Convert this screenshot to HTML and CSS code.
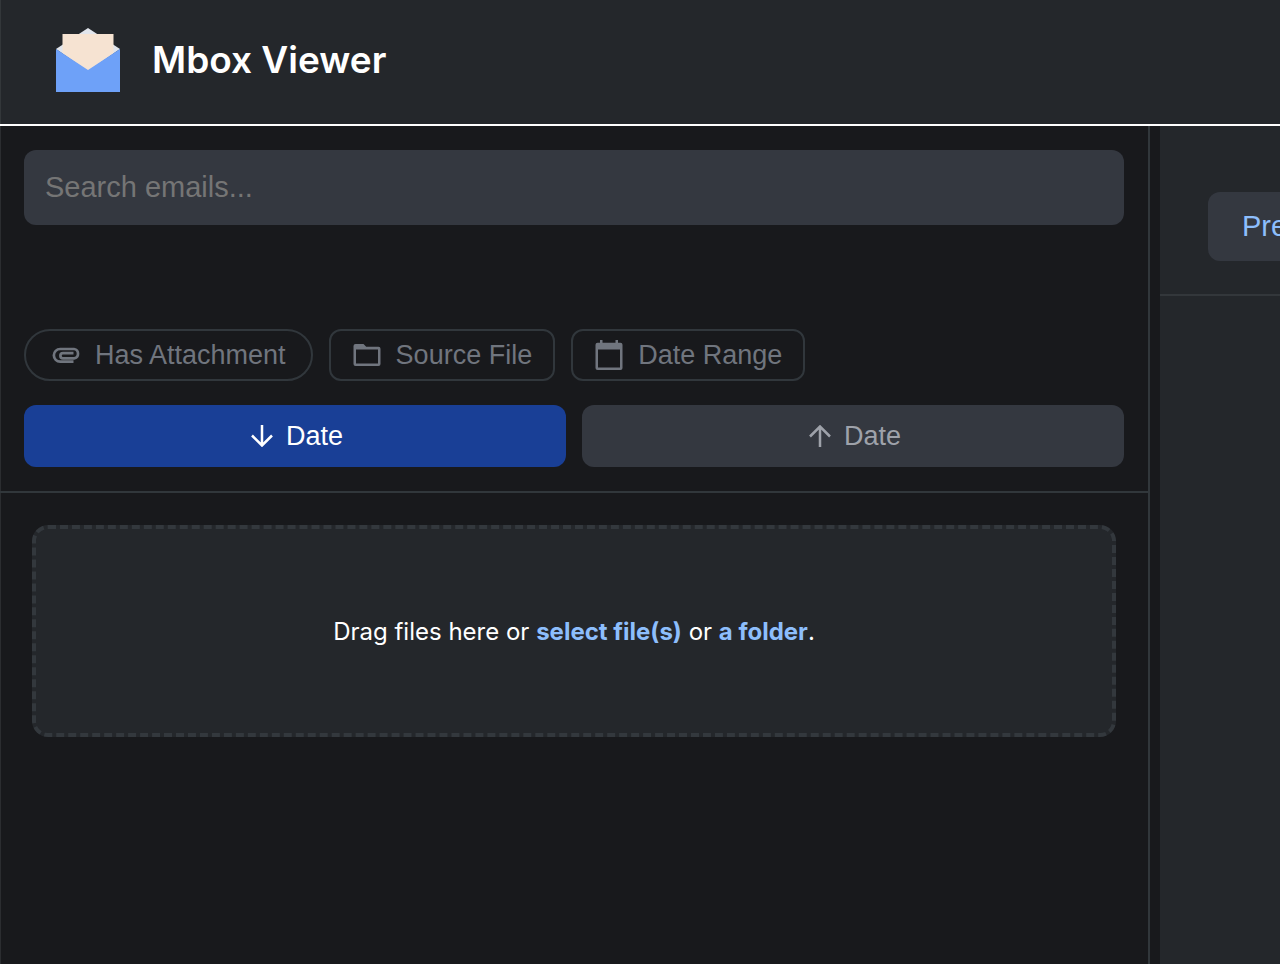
FILE: index.html
```
<!DOCTYPE html>
<html lang="en">

<head>
    <meta charset="UTF-8">
    <meta name="viewport" content="width=device-width, initial-scale=1.0">
    <title>Mbox Viewer</title>
    <link rel="stylesheet" href="styles.css">
</head>

<body>
    <header class="header">
        <svg class="logo" viewBox="0 0 64 64" aria-hidden="true">
            <path fill="#e1e5ec" d="M0 21 32 0l32 21-32 22z"/>
            <path fill="#f6e3d2" d="M6.500 6h51v19L32 43 6.500 25z"/>
            <path fill="#6ea1f8" d="M0 21l32 21 32-21v43H0z"/>
        </svg>
        <h1>Mbox Viewer</h1>
    </header>

    <div class="container">
        <section class="sidebar">
            <div class="filters">
                <input class="search" type="text" placeholder="Search emails..." aria-label="Search emails">

                <div class="chips">
                    <button type="button" class="chip chip-round">
                        <svg class="icon" viewBox="0 0 28 30" aria-hidden="true">
                            <path fill="none" stroke="currentColor" stroke-width="2.7" d="M21.500 21.700H8.200a6.300 6.300 0 0 1 0-12.700H22a4.700 4.700 0 0 1 0 9.300H11a2.600 2.600 0 0 1 0-5.200h10.500"/>
                        </svg>
                        Has Attachment
                    </button>
                    <button type="button" class="chip">
                        <svg class="icon" viewBox="0 0 28 30" aria-hidden="true">
                            <path fill="currentColor" fill-rule="evenodd" d="M2.500 4H10.500l2.700 2.800h12.300q2 0 2 2V24q0 2-2 2h-23q-2 0-2-2V6q0-2 2-2zM3 9.500v14h22v-14z"/>
                        </svg>
                        Source File
                    </button>
                    <button type="button" class="chip">
                        <svg class="icon" viewBox="0 0 28 30" aria-hidden="true">
                            <path fill="currentColor" fill-rule="evenodd" d="M5 0h2.500v2.800h13V0H23v2.800h2.500q2 0 2 2V28q0 2-2 2h-23q-2 0-2-2V4.800q0-2 2-2H5zM3 9.500v18h22v-18z"/>
                        </svg>
                        Date Range
                    </button>
                </div>

                <div class="sort">
                    <button type="button" class="sort-btn active">
                        <svg class="arrow" viewBox="0 0 22 22" aria-hidden="true">
                            <path d="M11 0v20M1 10.500l10 10 10-10"/>
                        </svg>
                        Date
                    </button>
                    <button type="button" class="sort-btn">
                        <svg class="arrow" viewBox="0 0 22 22" aria-hidden="true">
                            <path d="M11 22V2M1 11.500l10-10 10 10"/>
                        </svg>
                        Date
                    </button>
                </div>
            </div>

            <div class="dropzone">
                <p>Drag files here or <a href="#">select file(s)</a> or <a href="#">a folder</a>.</p>
            </div>
        </section>

        <main class="viewer">
            <div class="tabs">
                <button type="button" class="tab">Preview</button>
            </div>
        </main>
    </div>
</body>

</html>
```
FILE: styles.css
```
* {
    box-sizing: border-box;
}

body {
    margin: 0;
    min-height: 100vh;
    display: flex;
    flex-direction: column;
    background-color: #18191c;
    color: white;
    font-family: Inter, sans-serif;
}

button,
input {
    font-family: "Liberation Sans", Arial, sans-serif;
}

button {
    cursor: pointer;
}

.header {
    display: flex;
    align-items: center;
    gap: 32px;
    padding: 28px 56px 32px;
    background-color: #24272b;
    border-bottom: 2px solid white;
    box-shadow: inset 1px 0 #33373a;
}

.header h1 {
    margin: 0;
    font-size: 37px;
    line-height: 64px;
    font-weight: 600;
}

.logo {
    width: 64px;
    height: 64px;
}

.container {
    flex: 1;
    display: flex;
    gap: 10px;
}

/* left column */
.sidebar {
    flex: 1;
    min-width: 0;
    border-right: 2px solid #31373b;
    box-shadow: inset 1px 0 #2b2d30;
}

.filters {
    padding: 24px;
    border-bottom: 2px solid #31373b;
}

.search {
    display: block;
    width: 100%;
    padding: 20px 21px;
    border: none;
    border-radius: 12px;
    background-color: #343840;
    color: white;
    font-size: 29px;
    line-height: 35px;
}

.search::placeholder {
    color: #757575;
}

.chips {
    display: flex;
    gap: 16px;
    margin-top: 104px;
}

.chip {
    display: flex;
    align-items: center;
    gap: 15px;
    padding: 8px 21px 8px 22px;
    border: 2px solid #31373c;
    border-radius: 12px;
    background: none;
    color: #70757e;
    font-size: 27px;
    line-height: 32px;
}

.chip-round {
    padding: 8px 25px 8px 26px;
    border-radius: 26px;
}

.icon {
    width: 28px;
    height: 30px;
}

.sort {
    display: flex;
    gap: 16px;
    margin-top: 24px;
}

.sort-btn {
    flex: 1;
    display: flex;
    align-items: center;
    justify-content: center;
    gap: 13px;
    padding: 15px 12px 15px 16px;
    border: none;
    border-radius: 12px;
    background-color: #343840;
    color: #9ea2aa;
    font-size: 27px;
    line-height: 32px;
}

.sort-btn.active {
    background-color: #193f96;
    color: white;
}

.arrow {
    width: 22px;
    height: 22px;
    fill: none;
    stroke: currentColor;
    stroke-width: 2.5;
}

.dropzone {
    margin: 32px;
    padding: 87px 24px 85px;
    border: 4px dashed #33383d;
    border-radius: 16px;
    background-color: #24272b;
    text-align: center;
}

.dropzone p {
    margin: 0;
    font-size: 24px;
    line-height: 32px;
}

.dropzone a {
    color: #8dbefc;
    font-weight: 700;
    text-decoration: none;
}

/* right column */
.viewer {
    flex: 0 0 120px;
    overflow: hidden;
    background-color: #24272b;
}

.tabs {
    display: flex;
    padding: 66px 48px 33px;
    border-bottom: 2px solid #33373b;
}

.tab {
    flex-shrink: 0;
    padding: 17px 34px;
    border: none;
    border-radius: 12px;
    background-color: #343840;
    color: #8dbefc;
    font-size: 29px;
    line-height: 35px;
}
```
